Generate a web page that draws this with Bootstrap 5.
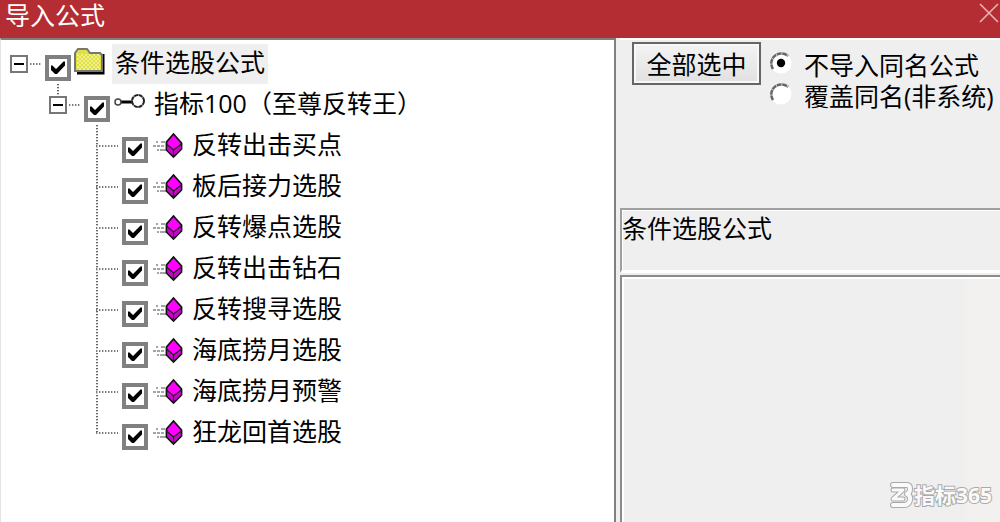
<!DOCTYPE html>
<html lang="zh-CN">
<head>
<meta charset="utf-8">
<meta name="viewport" content="width=device-width, initial-scale=1">
<title>导入公式</title>
<link href="https://cdn.jsdelivr.net/npm/bootstrap@5.3.0/dist/css/bootstrap.min.css" rel="stylesheet">
<style>
  body { background: #efefef; color: #000; font: 25px/40px "Open Sans", "Noto Sans CJK SC", sans-serif; }
  .titlebar { background: #b32d32; height: 38px; color: #fff; padding-left: 5px; }
  .titlebar h1 { font-size: 25px; line-height: 30px; font-weight: 400; }
  .close-btn { line-height: 0; }

  .tree-pane { width: 61.6%; background: #fff; border: solid #808080; border-width: 2px 2px 0 1px; border-left-color: #e4e4e4; padding: 3px 0 0 9px; }
  .tree-row { height: 41px; white-space: nowrap; }
  .tree-row label { padding: 0 3px; height: 40px; line-height: 36px; }
  .tree-row label.active { background: #efefef; }
  .node-icon { width: 41px; height: 40px; }
  .kids { margin-left: 39px; background: repeating-linear-gradient(#666 0 1px, #ccc 1px 2px, #fff 2px 3px) no-repeat 8px 0; }
  .level-1 { background-size: 2px 12px; }
  .level-2 { background-size: 2px 307px; }
  .level-2 .tree-row { padding-left: 8px; }
  .stub { width: 12px; height: 2px; margin: 0 3px 0 2px; background: repeating-linear-gradient(90deg, #777 0 1px, #ccc 1px 2px, #fff 2px 3px); }
  .level-2 .stub { width: 22px; margin: 0 4px 0 0; }
  .toggle { width: 18px; height: 18px; border: 2px solid #777; background: #fff; }
  .toggle svg { display: block; }
  .tick { appearance: none; width: 26px; height: 26px; margin: 9px 0 0; border: 4px solid #808080; background: #fff; }
  .tick:checked { background: #fff url("data:image/svg+xml,%3Csvg xmlns='http://www.w3.org/2000/svg' viewBox='0 0 18 18'%3E%3Cpath d='M2 6.500h1.500l3.500 3.500L14.500 2.500H16v4L8 15H6L2 11z'/%3E%3C/svg%3E") center/18px; }

  .side { padding-left: 4px; }
  .options { height: 170px; padding: 2px 0 0 12px; }
  .select-all { width: 129px; height: 43px; border: 2px solid #666; border-radius: 0; padding: 0; font-size: 25px; line-height: 34px; color: #000; background: linear-gradient(#f4f4f4, #e0e0e0); box-shadow: inset 0 0 0 2px #f8f8f8; }
  .choices { padding: 7px 0 0 8px; }
  .opt { height: 31px; line-height: 32px; white-space: nowrap; }
  .opt input { appearance: none; width: 24px; height: 24px; margin: 0 11px 3px 0; }
  .opt input { background: url("data:image/svg+xml,%3Csvg xmlns='http://www.w3.org/2000/svg' viewBox='0 0 24 24'%3E%3Ccircle cx='12' cy='12' r='10.500' fill='%23fff'/%3E%3Cpath d='M4 18A10 10 0 0 1 19 5' fill='none' stroke='%23666' stroke-width='2.500' stroke-dasharray='5 .6'/%3E%3C/svg%3E"); }
  .opt input:checked { background: url("data:image/svg+xml,%3Csvg xmlns='http://www.w3.org/2000/svg' viewBox='0 0 24 24'%3E%3Ccircle cx='12' cy='12' r='10.500' fill='%23fff'/%3E%3Cpath d='M4 18A10 10 0 0 1 19 5' fill='none' stroke='%23666' stroke-width='2.500' stroke-dasharray='5 .6'/%3E%3Ccircle cx='12' cy='12' r='4.200'/%3E%3C/svg%3E"); }
  .desc { height: 65px; border: solid #a0a0a0; border-width: 2px 0 3px 2px; border-bottom-color: #fff; line-height: 36px; box-shadow: inset 1px 1px #fff; }
  .detail { margin-top: 2px; border: solid #8c8c8c; border-width: 2px 0 0 2px; box-shadow: inset 2px 2px #fff; background: linear-gradient(270deg, #f3f1ef 28px, #f1f0ef 34px, #efefef 35px); }
  .brand-mark { right: 8px; bottom: 12px; height: 30px; font: 700 21px/30px "Open Sans", "Noto Sans CJK SC", sans-serif; color: #fafafa; -webkit-text-stroke: 2px #aaa; paint-order: stroke fill; }
</style>
</head>
<body class="min-vh-100 d-flex flex-column overflow-x-hidden">

<svg class="d-none" aria-hidden="true">
  <symbol id="cube" viewBox="0 0 41 40">
    <path d="M8 16h2m3 0h4M5 20h3m1 0h3m1 0h3M9 24h2m1 0h6" stroke="#888" stroke-width="1.500"/>
    <path d="M25.500 8l8 9v6l-8 8-7-7v-8z" fill="#f0f" stroke="#111" stroke-width="1.800"/>
    <path d="M19.500 20l5 5v4l-5-5zM26.500 25l6-5v3l-6 6z" fill="#c0c"/>
    <path d="M18.500 18l7 6 8-6M25.500 24v7" fill="none" stroke="#222" stroke-width="1.500"/>
  </symbol>
</svg>

<header class="titlebar d-flex justify-content-between align-items-start">
  <h1 class="m-0">导入公式</h1>
  <button type="button" class="close-btn btn p-0 border-0" aria-label="关闭">
    <svg width="22" height="26" viewBox="0 0 22 26"><path d="M2 4l18 18M20 4L2 22" stroke="#e8b4b5" stroke-width="1.600"/></svg>
  </button>
</header>

<main class="d-flex flex-grow-1">
  <section class="tree-pane flex-shrink-0">
    <ul class="list-unstyled m-0">
      <li>
        <div class="tree-row d-flex align-items-center">
          <button type="button" class="toggle btn rounded-0 p-0" aria-label="折叠"><svg width="14" height="14"><path d="M2 7h10" stroke="#000" stroke-width="2"/></svg></button>
          <span class="stub"></span>
          <input class="tick" type="checkbox" id="n0" checked>
          <svg class="node-icon" viewBox="0 0 41 40">
            <path d="M6 29h26V10" fill="none" stroke="#000" stroke-width="3"/>
            <path d="M4 27V9l3-4h9l3 4h10l2 2v16z" fill="#e0e040" stroke="#777" stroke-width="2"/>
            <path d="M6 11h23M6 15h23M6 19h23M6 23h23" stroke="#f5f5ae" stroke-width="1.500" stroke-dasharray="2 2"/>
            <path d="M8 13h21M8 17h21M8 21h21M8 25h21" stroke="#f5f5ae" stroke-width="1.500" stroke-dasharray="2 2"/>
          </svg>
          <label class="active" for="n0">条件选股公式</label>
        </div>
        <ul class="kids level-1 list-unstyled mb-0">
          <li>
            <div class="tree-row d-flex align-items-center">
              <button type="button" class="toggle btn rounded-0 p-0" aria-label="折叠"><svg width="14" height="14"><path d="M2 7h10" stroke="#000" stroke-width="2"/></svg></button>
              <span class="stub"></span>
              <input class="tick" type="checkbox" id="n1" checked>
              <svg class="node-icon" viewBox="0 0 41 40">
                <path d="M11 17h11" stroke="#000" stroke-width="3"/>
                <circle cx="8" cy="17" r="3" fill="#fff" stroke="#444" stroke-width="1.500"/>
                <circle cx="28" cy="16" r="6" fill="#fff" stroke="#222" stroke-width="2" stroke-dasharray="4.200 .5"/>
              </svg>
              <label for="n1">指标100（至尊反转王）</label>
            </div>
            <ul class="kids level-2 list-unstyled mb-0">
              <li class="tree-row d-flex align-items-center"><span class="stub"></span><input class="tick" type="checkbox" id="f1" checked><svg class="node-icon"><use href="#cube"/></svg><label for="f1">反转出击买点</label></li>
              <li class="tree-row d-flex align-items-center"><span class="stub"></span><input class="tick" type="checkbox" id="f2" checked><svg class="node-icon"><use href="#cube"/></svg><label for="f2">板后接力选股</label></li>
              <li class="tree-row d-flex align-items-center"><span class="stub"></span><input class="tick" type="checkbox" id="f3" checked><svg class="node-icon"><use href="#cube"/></svg><label for="f3">反转爆点选股</label></li>
              <li class="tree-row d-flex align-items-center"><span class="stub"></span><input class="tick" type="checkbox" id="f4" checked><svg class="node-icon"><use href="#cube"/></svg><label for="f4">反转出击钻石</label></li>
              <li class="tree-row d-flex align-items-center"><span class="stub"></span><input class="tick" type="checkbox" id="f5" checked><svg class="node-icon"><use href="#cube"/></svg><label for="f5">反转搜寻选股</label></li>
              <li class="tree-row d-flex align-items-center"><span class="stub"></span><input class="tick" type="checkbox" id="f6" checked><svg class="node-icon"><use href="#cube"/></svg><label for="f6">海底捞月选股</label></li>
              <li class="tree-row d-flex align-items-center"><span class="stub"></span><input class="tick" type="checkbox" id="f7" checked><svg class="node-icon"><use href="#cube"/></svg><label for="f7">海底捞月预警</label></li>
              <li class="tree-row d-flex align-items-center"><span class="stub"></span><input class="tick" type="checkbox" id="f8" checked><svg class="node-icon"><use href="#cube"/></svg><label for="f8">狂龙回首选股</label></li>
            </ul>
          </li>
        </ul>
      </li>
    </ul>
  </section>

  <section class="side flex-grow-1 d-flex flex-column">
    <div class="options d-flex align-items-start border-top border-2 border-white">
      <button type="button" class="select-all btn flex-shrink-0">全部选中</button>
      <div class="choices">
        <div class="opt d-flex align-items-center"><input type="radio" name="mode" id="skip" checked><label for="skip">不导入同名公式</label></div>
        <div class="opt d-flex align-items-center"><input type="radio" name="mode" id="cover"><label for="cover">覆盖同名(非系统)</label></div>
      </div>
    </div>
    <div class="desc">条件选股公式</div>
    <div class="detail flex-grow-1 position-relative">
      <div class="brand-mark position-absolute d-flex align-items-center">
        <svg width="25" height="30" viewBox="0 0 25 30" fill="none" stroke-linejoin="round" stroke-linecap="round">
          <path d="M4 5h14q3 0 3 4 0 4-3 5 4 2 3 6-1 5-6 5H4" stroke="#aaa" stroke-width="6"/>
          <path d="M4 5h14q3 0 3 4 0 4-3 5 4 2 3 6-1 5-6 5H4" stroke="#fafafa" stroke-width="4"/>
          <path d="M4 10h10L4 19h10" stroke="#aaa" stroke-width="5"/>
          <path d="M4 10h10L4 19h10" stroke="#fafafa" stroke-width="3"/>
        </svg>
        <span>指标365</span>
      </div>
    </div>
  </section>
</main>

<script src="https://cdn.jsdelivr.net/npm/bootstrap@5.3.0/dist/js/bootstrap.bundle.min.js"></script>
</body>
</html>
